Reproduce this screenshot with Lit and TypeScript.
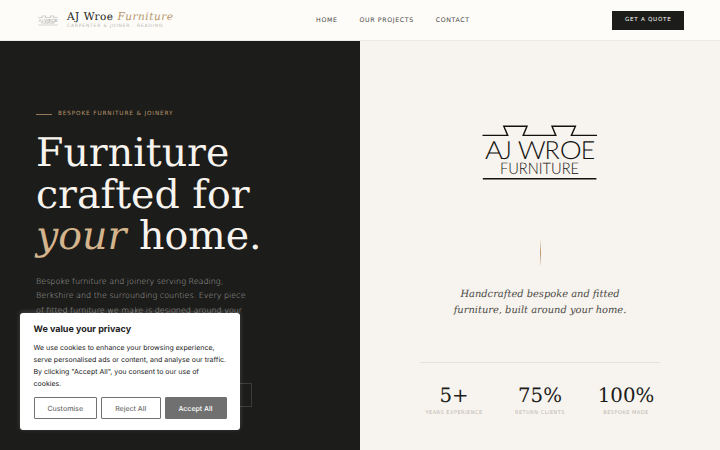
import { LitElement, css, html, svg } from 'lit';
import { customElement } from 'lit/decorators.js';

const NAV = ['Home', 'Our Projects', 'Contact'];

const STATS = [
	{ value: '5+', label: 'Years experience' },
	{ value: '75%', label: 'Return clients' },
	{ value: '100%', label: 'Bespoke made' },
];

const dovetails = svg`
  <path d="M.5 10.4H25.7L21.8 1.2H45L41.2 10.4H73.8L70 1.2H93.4L89.4 10.4H115" />
  <path d="M.8 53.7H114.4" />
`;

@customElement('wroe-logo')
class WroeLogo extends LitElement {
	static styles = css`
    :host {
      display: block;
    }

    svg {
      display: block;
      width: 100%;
      height: 100%;
      overflow: visible;
    }

    path {
      fill: none;
      stroke: #11110f;
      stroke-width: 1.4;
    }

    text {
      font-family: Lato, sans-serif;
      font-weight: 300;
      fill: #11110f;
    }
  `;

	render() {
		return html`
      <svg viewBox="0 0 115.5 55">
        ${dovetails}
        <text y="33.7" font-size="25">
          <tspan x="3" textLength="18" lengthAdjust="spacingAndGlyphs">A</tspan><tspan x="19.6">J</tspan>
          <tspan x="35.8" textLength="28" lengthAdjust="spacingAndGlyphs">W</tspan><tspan x="62.6">R</tspan><tspan x="77.8" textLength="22" lengthAdjust="spacingAndGlyphs">O</tspan><tspan x="98.8">E</tspan>
        </text>
        <text x="18" y="49.2" font-size="16" textLength="79" lengthAdjust="spacingAndGlyphs">FURNITURE</text>
      </svg>
    `;
	}
}

@customElement('site-header')
class SiteHeader extends LitElement {
	static styles = css`
    :host {
      display: flex;
      justify-content: space-between;
      align-items: center;
      height: 41px;
      padding: 0 36px;
      box-sizing: border-box;
      background: #fdfcf9;
      border-bottom: 1px solid #eeeae5;
      font-family: 'DejaVu Sans', sans-serif;
    }

    .brand {
      display: flex;
      align-items: center;
      gap: 7px;
    }

    .mark {
      width: 20px;
      height: 11px;
      margin: 1px 2px 0;
      opacity: 0.7;
    }

    .name {
      font: 10.5px/12px 'DejaVu Serif', serif;
      letter-spacing: 0.51px;
      color: #1c1c1a;
      white-space: nowrap;
    }

    .name em {
      color: #b8966a;
    }

    .tag {
      font-size: 4.5px;
      line-height: 6px;
      margin-top: 1px;
      letter-spacing: 0.8px;
      color: #bcb9b3;
      text-transform: uppercase;
      white-space: pre;
    }

    nav {
      display: flex;
      gap: 22px;
      font-size: 6.25px;
      letter-spacing: 0.62px;
      color: #4a4a46;
      text-transform: uppercase;
    }

    .quote {
      padding: 0 12.5px;
      font-size: 5.6px;
      line-height: 19px;
      letter-spacing: 0.73px;
      color: #fdfcf9;
      background: #1c1c1a;
      text-transform: uppercase;
    }
  `;

	render() {
		return html`
      <div class="brand">
        <wroe-logo class="mark"></wroe-logo>
        <div>
          <div class="name">AJ Wroe <em>Furniture</em></div>
          <div class="tag">Carpenter &amp; Joiner · Reading</div>
        </div>
      </div>
      <nav>${NAV.map((item) => html`<span>${item}</span>`)}</nav>
      <div class="quote">Get a quote</div>
    `;
	}
}

@customElement('cookie-notice')
class CookieNotice extends LitElement {
	static styles = css`
    :host {
      display: block;
      width: 220px;
      height: 117px;
      padding: 11px 13.5px;
      box-sizing: border-box;
      border-radius: 3px;
      background: #fff;
      box-shadow: 0 -1px 5px rgba(172, 171, 171, 0.3);
      font-family: Inter, sans-serif;
      color: #212121;
    }

    h2 {
      margin: 0 0 6.5px;
      font-size: 9px;
      line-height: 11px;
      font-weight: 700;
    }

    p {
      margin: 0 0 7.5px;
      font-size: 7px;
      line-height: 12px;
      white-space: nowrap;
    }

    .actions {
      display: grid;
      grid-template-columns: 63.5px 59.5px 62px;
      gap: 4px;
    }

    button {
      height: 22px;
      padding: 0;
      border: 1px solid #707070;
      border-radius: 1px;
      background: #fff;
      color: #707070;
      font: 500 7px Inter, sans-serif;
      text-rendering: inherit;
    }

    .accept {
      background: #707070;
      color: #fff;
    }
  `;

	render() {
		return html`
      <h2>We value your privacy</h2>
      <p>
        We use cookies to enhance your browsing experience,<br />
        serve personalised ads or content, and analyse our traffic.<br />
        By clicking "Accept All", you consent to our use of<br />
        cookies.
      </p>
      <div class="actions">
        <button>Customise</button>
        <button>Reject All</button>
        <button class="accept">Accept All</button>
      </div>
    `;
	}
}

@customElement('app-root')
class AppRoot extends LitElement {
	static styles = css`
    :host {
      display: block;
      position: relative;
      width: 720px;
      height: 450px;
      overflow: hidden;
      font-family: 'DejaVu Sans', sans-serif;
      text-rendering: geometricPrecision;
    }

    .hero {
      display: grid;
      grid-template-columns: 1fr 1fr;
      height: 409px;
    }

    .intro {
      padding: 70px 36px 0;
      background: #1c1c1a;
    }

    .eyebrow {
      display: flex;
      align-items: center;
      gap: 6px;
      font-size: 5.75px;
      line-height: 7px;
      letter-spacing: 0.85px;
      color: #b8966a;
      text-transform: uppercase;
    }

    .eyebrow::before {
      content: '';
      width: 16px;
      height: 1px;
      background: #94795a;
    }

    h1 {
      margin: 15px 0 0;
      font: 400 39.5px/41.5px 'DejaVu Serif', serif;
      color: #f7f3ee;
      white-space: nowrap;
    }

    h1 em {
      color: #d4b48c;
    }

    .lead {
      margin: 17px 0 0;
      font-size: 8px;
      line-height: 14.5px;
      font-weight: 300;
      color: #aaa9a5;
      white-space: nowrap;
    }

    .links {
      display: flex;
      gap: 8px;
      margin-top: 65px;
    }

    .link {
      width: 104px;
      height: 24px;
      box-sizing: border-box;
      border: 1px solid #3c3c3a;
    }

    .story {
      display: flex;
      flex-direction: column;
      align-items: center;
      padding-top: 84px;
      background: #f7f3ee;
    }

    .logo {
      width: 115.5px;
      height: 55px;
    }

    .rule {
      width: 1px;
      height: 28px;
      margin-top: 59px;
      background: linear-gradient(transparent, #b8966a, transparent);
    }

    .quote {
      margin: 20px 0 0;
      font: italic 9.9px/16px 'DejaVu Serif', serif;
      color: #4a4a46;
      text-align: center;
      white-space: nowrap;
    }

    .stats {
      display: grid;
      grid-template-columns: repeat(3, 1fr);
      gap: 18px;
      width: 240px;
      margin-top: 43px;
      padding-top: 22px;
      border-top: 1px solid #e5e1db;
      white-space: nowrap;
    }

    .stat {
      display: flex;
      flex-direction: column;
      align-items: center;
    }

    .value {
      font: 19.75px/22px 'DejaVu Serif', serif;
      color: #1c1c1a;
    }

    .label {
      margin-top: 3px;
      font-size: 5px;
      line-height: 6px;
      letter-spacing: 0.5px;
      color: #bbb8b2;
      text-transform: uppercase;
    }

    .notice {
      position: absolute;
      left: 20px;
      bottom: 20px;
    }
  `;

	render() {
		return html`
      <site-header></site-header>
      <main class="hero">
        <section class="intro">
          <div class="eyebrow">Bespoke furniture &amp; joinery</div>
          <h1>Furniture<br />crafted for<br /><em>your</em> home.</h1>
          <p class="lead">
            Bespoke furniture and joinery serving Reading,<br />
            Berkshire and the surrounding counties. Every piece<br />
            of fitted furniture we make is designed around your
          </p>
          <div class="links">
            <div class="link"></div>
            <div class="link"></div>
          </div>
        </section>
        <section class="story">
          <wroe-logo class="logo"></wroe-logo>
          <div class="rule"></div>
          <p class="quote">Handcrafted bespoke and fitted<br />furniture, built around your home.</p>
          <div class="stats">
            ${STATS.map(
				(stat) => html`
              <div class="stat">
                <div class="value">${stat.value}</div>
                <div class="label">${stat.label}</div>
              </div>
            `
			)}
          </div>
        </section>
      </main>
      <cookie-notice class="notice"></cookie-notice>
    `;
	}
}
